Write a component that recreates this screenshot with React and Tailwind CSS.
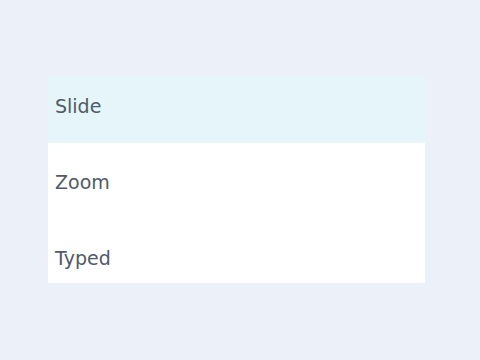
export default function App() {
  const items = ["Slide", "Zoom", "Typed"];

  return (
    <div className="w-[480px] h-[360px] bg-[#ecf0f8] pt-[76px] pl-[48px]">
      <div
        className="w-[377px] h-[207px] bg-white overflow-hidden"
        style={{ fontFamily: '"DejaVu Sans", sans-serif' }}
      >
        {items.map((item, i) => (
          <div
            key={item}
            className={`pl-[7px] pt-[18px] text-[19px] leading-[24px] text-[#4f5a6a] ${
              i === 0 ? "bg-[#e5f5fa] h-[67px] mb-[9px]" : "h-[76px]"
            }`}
          >
            {item}
          </div>
        ))}
      </div>
    </div>
  );
}
